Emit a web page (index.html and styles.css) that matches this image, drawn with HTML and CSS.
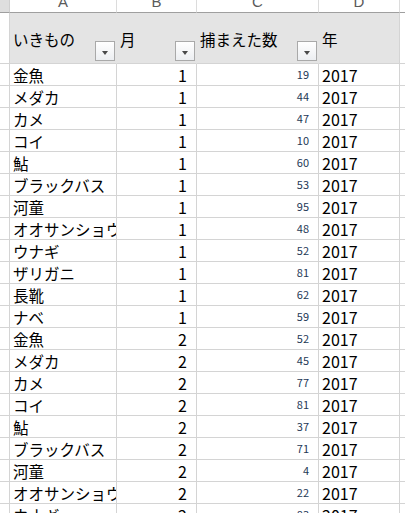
FILE: index.html
```html
<!DOCTYPE html>
<html lang="ja">
<head>
<meta charset="utf-8">
<link rel="stylesheet" href="styles.css">
</head>
<body>
<div class="sheet">
  <div class="colhead corner"></div>
  <div class="colhead"><span>A</span></div>
  <div class="colhead"><span>B</span></div>
  <div class="colhead"><span>C</span></div>
  <div class="colhead"><span>D</span></div>
  <div class="colhead e"></div>

  <div class="rh"></div>
  <div class="hd">いきもの<span class="filter"><i></i></span></div>
  <div class="hd">月<span class="filter"><i></i></span></div>
  <div class="hd">捕まえた数<span class="filter"><i></i></span></div>
  <div class="hd hd-last">年</div>
  <div class="c e"></div>

  <div class="rh"></div><div class="c a">金魚</div><div class="c b">1</div><div class="c n">19</div><div class="c d">2017</div><div class="c e"></div>
  <div class="rh"></div><div class="c a">メダカ</div><div class="c b">1</div><div class="c n">44</div><div class="c d">2017</div><div class="c e"></div>
  <div class="rh"></div><div class="c a">カメ</div><div class="c b">1</div><div class="c n">47</div><div class="c d">2017</div><div class="c e"></div>
  <div class="rh"></div><div class="c a">コイ</div><div class="c b">1</div><div class="c n">10</div><div class="c d">2017</div><div class="c e"></div>
  <div class="rh"></div><div class="c a">鮎</div><div class="c b">1</div><div class="c n">60</div><div class="c d">2017</div><div class="c e"></div>
  <div class="rh"></div><div class="c a">ブラックバス</div><div class="c b">1</div><div class="c n">53</div><div class="c d">2017</div><div class="c e"></div>
  <div class="rh"></div><div class="c a">河童</div><div class="c b">1</div><div class="c n">95</div><div class="c d">2017</div><div class="c e"></div>
  <div class="rh"></div><div class="c a">オオサンショウウオ</div><div class="c b">1</div><div class="c n">48</div><div class="c d">2017</div><div class="c e"></div>
  <div class="rh"></div><div class="c a">ウナギ</div><div class="c b">1</div><div class="c n">52</div><div class="c d">2017</div><div class="c e"></div>
  <div class="rh"></div><div class="c a">ザリガニ</div><div class="c b">1</div><div class="c n">81</div><div class="c d">2017</div><div class="c e"></div>
  <div class="rh"></div><div class="c a">長靴</div><div class="c b">1</div><div class="c n">62</div><div class="c d">2017</div><div class="c e"></div>
  <div class="rh"></div><div class="c a">ナベ</div><div class="c b">1</div><div class="c n">59</div><div class="c d">2017</div><div class="c e"></div>
  <div class="rh"></div><div class="c a">金魚</div><div class="c b">2</div><div class="c n">52</div><div class="c d">2017</div><div class="c e"></div>
  <div class="rh"></div><div class="c a">メダカ</div><div class="c b">2</div><div class="c n">45</div><div class="c d">2017</div><div class="c e"></div>
  <div class="rh"></div><div class="c a">カメ</div><div class="c b">2</div><div class="c n">77</div><div class="c d">2017</div><div class="c e"></div>
  <div class="rh"></div><div class="c a">コイ</div><div class="c b">2</div><div class="c n">81</div><div class="c d">2017</div><div class="c e"></div>
  <div class="rh"></div><div class="c a">鮎</div><div class="c b">2</div><div class="c n">37</div><div class="c d">2017</div><div class="c e"></div>
  <div class="rh"></div><div class="c a">ブラックバス</div><div class="c b">2</div><div class="c n">71</div><div class="c d">2017</div><div class="c e"></div>
  <div class="rh"></div><div class="c a">河童</div><div class="c b">2</div><div class="c n">4</div><div class="c d">2017</div><div class="c e"></div>
  <div class="rh"></div><div class="c a">オオサンショウウオ</div><div class="c b">2</div><div class="c n">22</div><div class="c d">2017</div><div class="c e"></div>
  <div class="rh"></div><div class="c a">ウナギ</div><div class="c b">2</div><div class="c n">83</div><div class="c d">2017</div><div class="c e"></div>
</div>
</body>
</html>
```

FILE: styles.css
```css
html, body {
  margin: 0;
  padding: 0;
  background: #ffffff;
  overflow: hidden;
}

.sheet {
  display: grid;
  grid-template-columns: 10px 107px 80px 122px 81px 5px;
  grid-template-rows: 13px 51px repeat(21, 22px);
  width: 405px;
  font-family: "Noto Sans CJK JP", "Noto Sans", sans-serif;
  color: #000000;
}

.sheet > div {
  box-sizing: border-box;
  overflow: hidden;
  white-space: nowrap;
  min-width: 0;
}

.colhead {
  border-right: 1px solid #dcdcdc;
  border-bottom: 1px solid #9f9f9f;
  background: #ffffff;
  display: flex;
  justify-content: center;
  align-items: flex-start;
  font-family: "Liberation Sans", Arial, sans-serif;
  font-size: 15px;
  line-height: 4px;
  color: #5a5a5a;
}

.colhead span {
  display: block;
}

.corner {
  background: #dedede;
  border-right: 1px solid #cfcfcf;
}

.rh {
  border-right: 1px solid #d4d4d4;
  border-bottom: 1px solid #d4d4d4;
}

.hd {
  position: relative;
  background: #e4e4e4;
  border-right: 1px solid transparent;
  border-bottom: 1px solid #d4d4d4;
  font-size: 15.5px;
  line-height: 21px;
  padding: 16px 0 0 3px;
}

.hd-last {
  border-right-color: #d4d4d4;
}

.filter {
  position: absolute;
  right: 1px;
  bottom: 2px;
  width: 20px;
  height: 20px;
  box-sizing: border-box;
  border: 1px solid #a9a9a9;
  background: linear-gradient(#ffffff, #eceef1);
  display: flex;
  align-items: center;
  justify-content: center;
}

.filter i {
  display: block;
  width: 0;
  height: 0;
  margin-top: 3px;
  border-left: 3.5px solid transparent;
  border-right: 3.5px solid transparent;
  border-top: 4px solid #4a4a4a;
}

.c {
  border-right: 1px solid #d4d4d4;
  border-bottom: 1px solid #d4d4d4;
  font-size: 16px;
  line-height: 21px;
  padding-top: 1px;
}

.sheet > .e {
  border-right: none;
}

.a {
  font-size: 15.5px;
  padding-left: 3px;
}

.b {
  text-align: right;
  padding-right: 9px;
}

.n {
  text-align: right;
  padding-right: 9px;
  padding-top: 0;
  font-size: 11px;
  line-height: 20px;
  color: #243856;
}

.d {
  padding-left: 3px;
}
```
